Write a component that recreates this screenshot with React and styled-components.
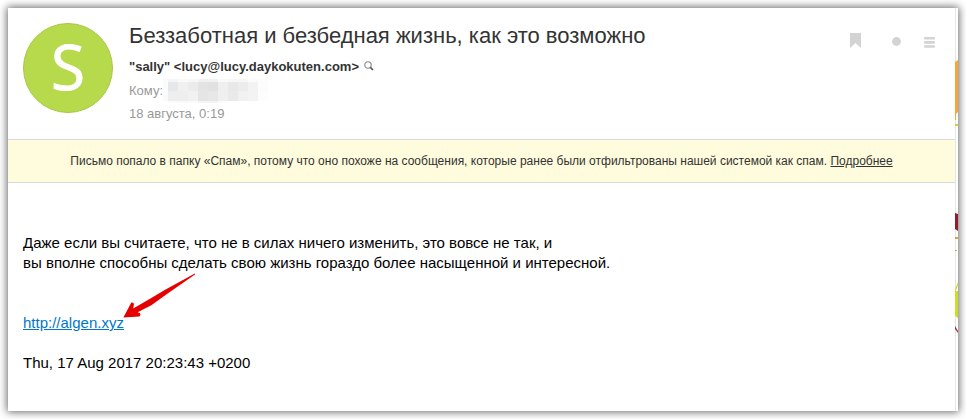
import styled, { createGlobalStyle } from 'styled-components'

const mosaic = [
    ['#fbfbfb', '#f5f5f5', '#fafafa', '#f7f7f7', '#f1f1f1', '#f1f1f1', '#fafafa', '#f7f7f7', '#f6f6f6', '#fbfbfb', '#fdfdfd'],
    ['#fbfbfb', '#e6e7ea', '#f0f0f1', '#ebebec', '#e4e3e4', '#e1e1e1', '#efefef', '#e9e8e8', '#ececec', '#f3f3f3', '#fcfcfc'],
    ['#fafafa', '#eeeeee', '#eeeeee', '#f1f1f1', '#e6e4e5', '#e7e7e7', '#efefef', '#ebe9ea', '#f1f1f1', '#f3f3f3', '#fdfdfd'],
    ['#ffffff', '#fbfbfb', '#f9f9f9', '#fbfbfb', '#f4f4f4', '#f4f4f4', '#fbfbfb', '#ffffff', '#ffffff', '#ffffff', '#ffffff'],
]

const Recipient = () => {
    return(
        <HiddenAddress aria-hidden="true">
            {mosaic.flat().map((color, index) => (
                <Cell key={index} $color={color}/>
            ))}
        </HiddenAddress>
    )
}

const Letter = () => {
    return(
        <LetterContent>
            <Header>
                <Avatar>S</Avatar>
                <Details>
                    <h1>Беззаботная и безбедная жизнь, как это возможно</h1>
                    <Sender>
                        <span>"sally" &lt;lucy@lucy.daykokuten.com&gt;</span>
                        <IconButton type="button" aria-label="Найти письма">
                            <svg width="10" height="10" viewBox="0 0 10 10" fill="none">
                                <circle cx="4" cy="4" r="3.2" stroke="#7d8a94" strokeWidth="1.1"/>
                                <path d="M6.4 6.4L9 9" stroke="#555" strokeWidth="1.6"/>
                            </svg>
                        </IconButton>
                    </Sender>
                    <Meta>Кому:<Recipient/></Meta>
                    <Meta>18 августа, 0:19</Meta>
                </Details>
                <Actions>
                    <IconButton type="button" aria-label="Закладка">
                        <svg width="11" height="15" viewBox="0 0 11 15" fill="#d3d3d3">
                            <path d="M0 0H11V15L5.5 10L0 15Z"/>
                        </svg>
                    </IconButton>
                    <IconButton type="button" aria-label="Непрочитанное">
                        <svg width="17" height="15" viewBox="0 0 17 15" fill="#d3d3d3">
                            <circle cx="12.5" cy="8.5" r="4.4"/>
                        </svg>
                    </IconButton>
                    <IconButton type="button" aria-label="Меню">
                        <svg width="11" height="15" viewBox="0 0 11 15" fill="#d3d3d3">
                            <rect y="4" width="11" height="2.6" rx="1.2"/>
                            <rect y="8.1" width="11" height="2.6" rx="1.2"/>
                            <rect y="12.2" width="11" height="2.6" rx="1.2"/>
                        </svg>
                    </IconButton>
                </Actions>
            </Header>
            <Notice>
                Письмо попало в папку «Спам», потому что оно похоже на сообщения, которые ранее были отфильтрованы нашей системой как спам. <a href="#more">Подробнее</a>
            </Notice>
            <Body>
                <p>
                    Даже если вы считаете, что не в силах ничего изменить, это вовсе не так, и<br/>
                    вы вполне способны сделать свою жизнь гораздо более насыщенной и интересной.
                </p>
                <LinkRow>
                    <a href="#algen">http://algen.xyz</a>
                    <Arrow width="74" height="46" viewBox="0 0 74 46" aria-hidden="true">
                        <path d="M71.8 0.4L41.7 16.9L28.3 24.9L10.2 35.6L11 31Q10.4 28.8 8.3 29.6L0.4 44.4L16.4 43.6Q18.2 42.2 17 40.3L14.6 39.2L28.3 32.3L45 20.2L72 1.4Z" fill="#e60000"/>
                    </Arrow>
                </LinkRow>
                <p>Thu, 17 Aug 2017 20:23:43 +0200</p>
            </Body>
        </LetterContent>
    )
}

const App = () => {
    return(
        <>
            <GlobalStyle/>
            <Frame>
                <Letter/>
                <Side aria-hidden="true">
                    <svg width="3" height="330" viewBox="0 0 3 330">
                        <path d="M0 54L3 52V104L1 106V112H0Z" fill="#f9a63a"/>
                        <path d="M0 116H3V118H0Z" fill="#c6d92d"/>
                        <path d="M0 205L3 206V223L0 221Z" fill="#8f1d2c"/>
                        <path d="M0 229H3V231H0ZM0 242H2V243H0Z" fill="#d9a441"/>
                        <path d="M0 281L3 274V277L0 285ZM0 283H3V310L0 308Z" fill="#cfdc29"/>
                        <path d="M0 318L3 323V325L0 321Z" fill="#b02a3c"/>
                    </svg>
                </Side>
            </Frame>
        </>
    )
}

export default App

const GlobalStyle = createGlobalStyle`
    * {
        box-sizing: border-box;
    }

    body {
        margin: 0;
        padding: 8px;
        background: #fff;
        font-family: "Liberation Sans", Arial, sans-serif;
    }

    h1, p {
        margin: 0;
    }
`;

const Frame = styled.main`
    display: flex;
    background: #fff;
    box-shadow: 0 0 8px 1px #00000099;
`;

const Side = styled.aside`
    width: 3px;
    flex-shrink: 0;
    box-shadow: inset 1px 0 #e6e6e6;

    svg {
        display: block;
    }
`;

const LetterContent = styled.article`
    flex: 1;
    min-width: 0;
`;

const Header = styled.header`
    display: flex;
    gap: 16px;
    padding: 15px 20px 14px 15px;
`;

const Avatar = styled.div`
    display: flex;
    justify-content: center;
    align-items: center;
    flex-shrink: 0;
    width: 90px;
    height: 90px;
    border: 1px solid #a8c846;
    border-radius: 50%;
    background: #b7da4d;
    color: #fff;
    font-family: "Open Sans", sans-serif;
    font-size: 62px;
    line-height: 84px;
    padding-bottom: 4px;
    -webkit-text-stroke: 1px #fff;
`;

const Details = styled.div`
    flex: 1;
    min-width: 0;

    h1 {
        color: #333;
        font-size: 22px;
        font-weight: 400;
        line-height: 26px;
        padding-bottom: 5px;
    }
`;

const Sender = styled.div`
    display: flex;
    align-items: center;
    gap: 5px;
    height: 25px;
    padding-bottom: 1px;
    color: #333;
    font-size: 13px;
    font-weight: 700;
    line-height: 23px;
`;

const Meta = styled.div`
    display: flex;
    align-items: center;
    height: 23px;
    color: #999;
    font-size: 13px;
    line-height: 23px;
`;

const HiddenAddress = styled.span`
    display: grid;
    grid-template-columns: 5px repeat(10, 10px);
    grid-template-rows: 3px 9px 10px 2px;
`;

const Cell = styled.span`
    background: ${({ $color }) => $color};
`;

const Actions = styled.div`
    display: flex;
    align-items: flex-start;
    gap: 23px;
    padding-top: 10px;
`;

const IconButton = styled.button`
    display: flex;
    padding: 0;
    border: none;
    background: none;
    cursor: pointer;
`;

const Notice = styled.div`
    padding: 12px 16px;
    border: 1px solid #d9d9d9;
    border-width: 1px 0;
    background: #fffbdd;
    color: #333;
    font-size: 12px;
    line-height: 18px;
    text-align: center;

    a {
        color: #333;
    }
`;

const Body = styled.div`
    padding: 50px 15px 38px;
    color: #000;
    font-size: 15px;
    line-height: 20px;
`;

const LinkRow = styled.div`
    position: relative;
    display: flex;
    padding: 40px 0 20px;

    a {
        color: #0077cc;
    }
`;

const Arrow = styled.svg`
    position: absolute;
    left: 100px;
    top: 0;
`;
